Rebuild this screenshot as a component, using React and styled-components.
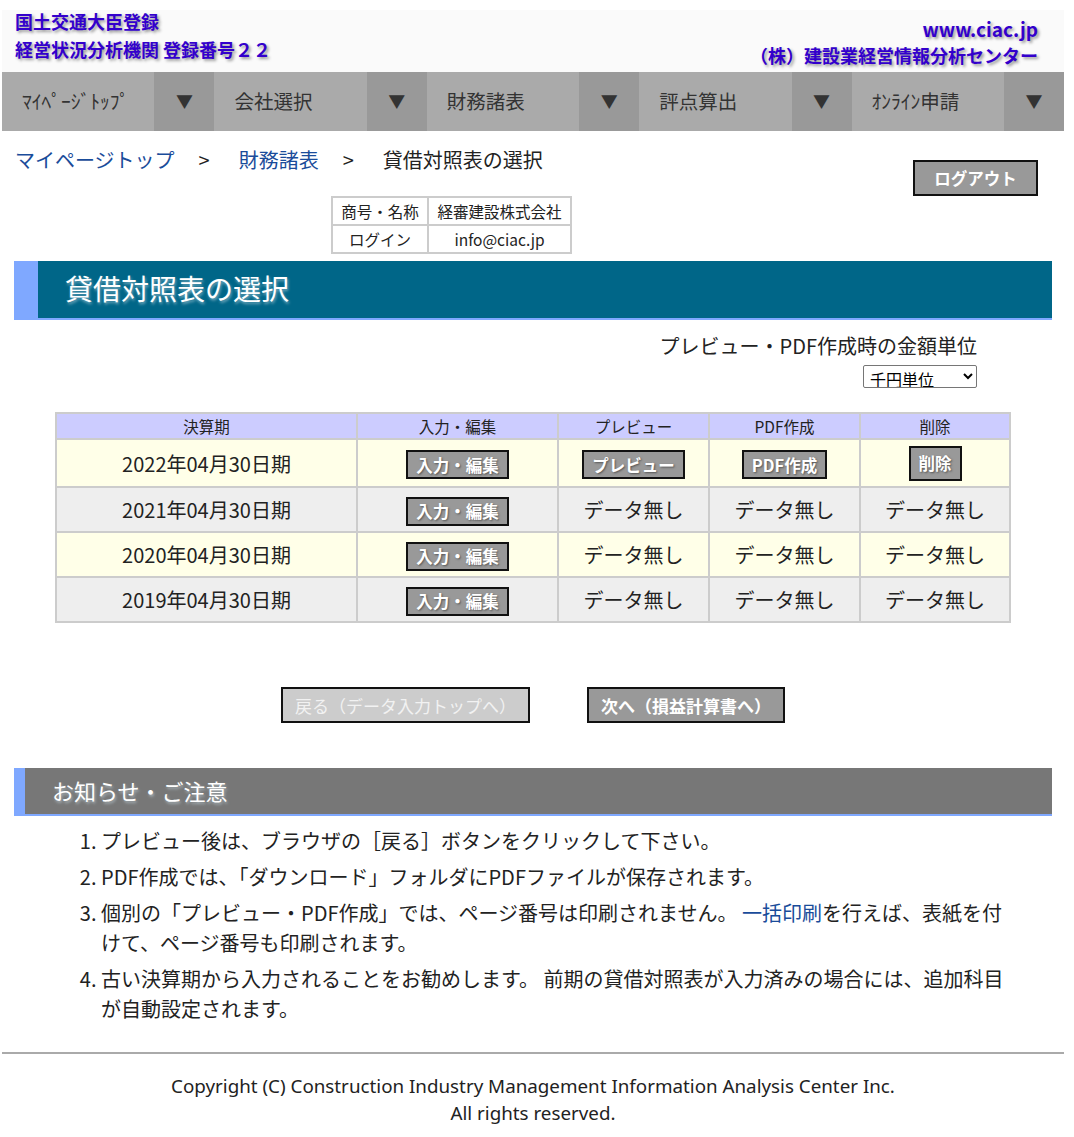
import styled, { createGlobalStyle } from "styled-components";

const GlobalStyle = createGlobalStyle`
  body {
    margin: 0;
    background: #fff;
    font-family: "Noto Sans CJK JP", "Noto Sans", sans-serif;
    color: #222;
  }
`;

const NAV = ["ﾏｲﾍﾟｰｼﾞﾄｯﾌﾟ", "会社選択", "財務諸表", "評点算出", "ｵﾝﾗｲﾝ申請"];

const ROWS = [
  { period: "2022年04月30日期", hasData: true, bg: "#ffffe8" },
  { period: "2021年04月30日期", hasData: false, bg: "#eeeeee" },
  { period: "2020年04月30日期", hasData: false, bg: "#ffffe8" },
  { period: "2019年04月30日期", hasData: false, bg: "#eeeeee" },
];

const COLS = [
  { label: "決算期", w: 299 },
  { label: "入力・編集", w: 199 },
  { label: "プレビュー", w: 149 },
  { label: "PDF作成", w: 149 },
  { label: "削除" },
];

export default function App() {
  return (
    <Page>
      <GlobalStyle />
      <Header>
        <HeaderLeft>
          <span>国土交通大臣登録</span>
          <span>経営状況分析機関 登録番号２２</span>
        </HeaderLeft>
        <HeaderRight>
          <span>www.ciac.jp</span>
          <span>（株）建設業経営情報分析センター</span>
        </HeaderRight>
      </Header>
      <Nav>
        {NAV.map((n) => (
          <NavItem key={n}>
            <NavLabel>{n}</NavLabel>
            <NavArrow>▼</NavArrow>
          </NavItem>
        ))}
      </Nav>
      <Main>
        <TopRow>
          <Crumbs>
            <CrumbLink>マイページトップ</CrumbLink>
            <Sep>&gt;</Sep>
            <CrumbLink>財務諸表</CrumbLink>
            <Sep>&gt;</Sep>
            <span>貸借対照表の選択</span>
          </Crumbs>
          <GrayButton>ログアウト</GrayButton>
        </TopRow>
        <InfoTable>
          <tbody>
            <tr>
              <td>商号・名称</td>
              <td>経審建設株式会社</td>
            </tr>
            <tr>
              <td>ログイン</td>
              <td>info@ciac.jp</td>
            </tr>
          </tbody>
        </InfoTable>
        <TitleBar $bg="#006688" $size="28px" $h="57px">
          <span>貸借対照表の選択</span>
        </TitleBar>
        <UnitBox>
          <span>プレビュー・PDF作成時の金額単位</span>
          <UnitSelect defaultValue="k">
            <option value="k">千円単位</option>
            <option value="y">円単位</option>
          </UnitSelect>
        </UnitBox>
        <PeriodTable>
          <thead>
            <tr>
              {COLS.map((c) => (
                <HeadCell key={c.label} $w={c.w}>
                  {c.label}
                </HeadCell>
              ))}
            </tr>
          </thead>
          <tbody>
            {ROWS.map((r) => (
              <BodyRow key={r.period} $bg={r.bg}>
                <td>{r.period}</td>
                <td>
                  <CellButton>入力・編集</CellButton>
                </td>
                {r.hasData ? (
                  <>
                    <td>
                      <CellButton>プレビュー</CellButton>
                    </td>
                    <td>
                      <CellButton>PDF作成</CellButton>
                    </td>
                    <td>
                      <CellButton $tall>削除</CellButton>
                    </td>
                  </>
                ) : (
                  <>
                    <td>データ無し</td>
                    <td>データ無し</td>
                    <td>データ無し</td>
                  </>
                )}
              </BodyRow>
            ))}
          </tbody>
        </PeriodTable>
        <ButtonRow>
          <PageButton $disabled>戻る（データ入力トップへ）</PageButton>
          <PageButton>次へ（損益計算書へ）</PageButton>
        </ButtonRow>
        <TitleBar $bg="#777777" $size="22px" $h="46px" $accent="11px" $pad="27px">
          <span>お知らせ・ご注意</span>
        </TitleBar>
        <Notes>
          <li>プレビュー後は、ブラウザの［戻る］ボタンをクリックして下さい。</li>
          <li>PDF作成では、「ダウンロード」フォルダにPDFファイルが保存されます。</li>
          <li>
            個別の「プレビュー・PDF作成」では、ページ番号は印刷されません。 <NoteLink>一括印刷</NoteLink>
            を行えば、表紙を付けて、ページ番号も印刷されます。
          </li>
          <li>
            古い決算期から入力されることをお勧めします。 前期の貸借対照表が入力済みの場合には、追加科目が自動設定されます。
          </li>
        </Notes>
      </Main>
      <Rule />
      <Footer>
        Copyright (C) Construction Industry Management Information Analysis Center Inc.
        <br />
        All rights reserved.
      </Footer>
    </Page>
  );
}

const Page = styled.div`
  margin: 10px 10px 0 2px;
  padding-bottom: 14px;
`;

const Header = styled.header`
  display: flex;
  justify-content: space-between;
  height: 62px;
  padding: 0 26px 0 13px;
  background: #fafafa;
  font-weight: 700;
  color: #3300cc;
  text-shadow: 2px 2px 3px #999;
`;

const HeaderLeft = styled.div`
  display: flex;
  flex-direction: column;
  font-size: 18px;
  line-height: 28px;
  margin-top: -3px;
`;

const HeaderRight = styled.div`
  display: flex;
  flex-direction: column;
  align-items: flex-end;
  font-size: 18px;
  line-height: 26px;
  padding-top: 6px;
  span:first-child {
    font-size: 19px;
  }
`;

const Nav = styled.nav`
  display: grid;
  grid-template-columns: repeat(5, 1fr);
  height: 59px;
  background: #aaaaaa;
`;

const NavItem = styled.div`
  display: flex;
  align-items: stretch;
`;

const NavLabel = styled.div`
  flex: 1;
  display: flex;
  align-items: center;
  padding: 0 0 3px 20px;
  font-size: 19.5px;
  color: #333;
`;

const NavArrow = styled.div`
  width: 60px;
  display: flex;
  align-items: center;
  justify-content: center;
  padding-bottom: 3px;
  background: #999999;
  font-size: 17px;
  color: #333;
`;

const Main = styled.main`
  padding: 0 12px;
`;

const TopRow = styled.div`
  display: flex;
  justify-content: space-between;
  align-items: flex-start;
  height: 65px;
  padding-right: 14px;
`;

const Crumbs = styled.div`
  display: flex;
  align-items: center;
  padding: 14px 0 0 1px;
  font-size: 20px;
  line-height: 30px;
  color: #222;
`;

const CrumbLink = styled.a`
  color: #1a4c9a;
`;

const Sep = styled.span`
  margin: 0 29px 0 24px;
`;

const GrayButton = styled.button`
  margin-top: 29px;
  width: 125px;
  height: 36px;
  background: #999999;
  border: 2px solid #111;
  color: #fff;
  font-family: inherit;
  font-size: 16.5px;
  font-weight: 700;
  padding: 0;
`;

const InfoTable = styled.table`
  margin-left: 317px;
  border-collapse: collapse;
  border: 2px solid #cccccc;
  font-size: 15.5px;
  td {
    border: 2px solid #cccccc;
    height: 26px;
    padding: 0 6px;
    text-align: center;
    line-height: 26px;
  }
  td:first-child {
    width: 82px;
  }
  td:last-child {
    width: 129px;
  }
`;

const TitleBar = styled.div`
  display: flex;
  align-items: center;
  height: ${(p) => p.$h};
  margin-top: 7px;
  background: ${(p) => p.$bg};
  border-left: ${(p) => p.$accent || "24px"} solid #7fa8ff;
  border-bottom: 2px solid #7fa8ff;
  padding-left: ${(p) => p.$pad || "27px"};
  color: #fff;
  font-size: ${(p) => p.$size};
  text-shadow: 1px 2px 3px rgba(200, 220, 230, 0.6);
  span {
    margin-top: -3px;
  }
`;

const UnitBox = styled.div`
  display: flex;
  flex-direction: column;
  align-items: flex-end;
  padding: 12px 75px 0 0;
  font-size: 20px;
  line-height: 28px;
`;

const UnitSelect = styled.select`
  margin-top: 5px;
  width: 114px;
  height: 23px;
  font-family: inherit;
  font-size: 16px;
  border: 1px solid #767676;
  border-radius: 2px;
  background: #fff;
  padding: 0 2px;
`;

const PeriodTable = styled.table`
  width: 956px;
  margin: 24px auto 0;
  border-spacing: 2px;
  background: #cccccc;
  text-align: center;
  td {
    font-size: 20px;
    padding: 0;
  }
`;

const HeadCell = styled.th`
  width: ${(p) => (p.$w ? `${p.$w}px` : "auto")};
  background: #ccccff;
  height: 24px;
  font-size: 15.5px;
  font-weight: 400;
  padding: 0;
`;

const BodyRow = styled.tr`
  height: 43px;
  &:first-child {
    height: 46px;
  }
  td {
    background: ${(p) => p.$bg};
  }
`;

const CellButton = styled.button`
  height: ${(p) => (p.$tall ? "35px" : "29px")};
  padding: 0 8px;
  background: #999999;
  border: 2px solid #111;
  color: #fff;
  font-family: inherit;
  font-size: 16.5px;
  font-weight: 700;
  text-shadow: 1px 1px 2px #555;
  vertical-align: middle;
`;

const ButtonRow = styled.div`
  display: flex;
  justify-content: center;
  gap: 57px;
  margin: 64px 0 45px;
`;

const PageButton = styled.button`
  height: 36px;
  padding: 0 12px;
  min-width: 196px;
  background: ${(p) => (p.$disabled ? "#cccccc" : "#999999")};
  border: 2px solid #111;
  color: ${(p) => (p.$disabled ? "#f2f2f2" : "#fff")};
  font-family: inherit;
  font-size: 17px;
  font-weight: ${(p) => (p.$disabled ? 400 : 700)};
`;

const Notes = styled.ol`
  margin: 10px 40px 0 0;
  padding-left: 87px;
  font-size: 20px;
  line-height: 30px;
  li {
    margin-bottom: 6px;
  }
`;

const NoteLink = styled.a`
  color: #1a4c9a;
`;

const Rule = styled.hr`
  margin: 28px 0 0;
  border: none;
  border-top: 2px solid #aaaaaa;
`;

const Footer = styled.footer`
  padding-top: 19px;
  text-align: center;
  font-family: "Noto Sans", "Noto Sans CJK JP", sans-serif;
  font-size: 18.8px;
  line-height: 27px;
  color: #222;
`;
